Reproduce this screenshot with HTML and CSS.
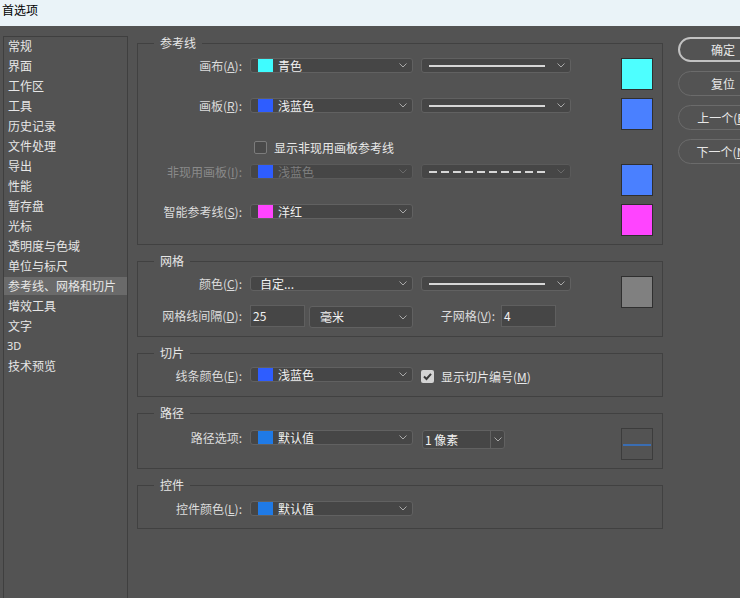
FILE: index.html
```html
<!DOCTYPE html>
<html lang="zh-CN">
<head>
<meta charset="utf-8">
<title>首选项</title>
<link rel="stylesheet" href="styles.css">
</head>
<body>
<div class="titlebar">首选项</div>
<div class="main">
  <ul class="nav">
    <li>常规</li>
    <li>界面</li>
    <li>工作区</li>
    <li>工具</li>
    <li>历史记录</li>
    <li>文件处理</li>
    <li>导出</li>
    <li>性能</li>
    <li>暂存盘</li>
    <li>光标</li>
    <li>透明度与色域</li>
    <li>单位与标尺</li>
    <li class="active">参考线、网格和切片</li>
    <li>增效工具</li>
    <li>文字</li>
    <li class="latin">3D</li>
    <li>技术预览</li>
  </ul>

  <div class="content">
    <fieldset class="group">
      <legend>参考线</legend>
      <div class="rows">
        <div class="row">
          <span class="lbl">画布(<u>A</u>):</span>
          <div class="sel"><span class="chip c-cyan"></span><span class="val">青色</span><svg class="chev" width="8" height="5" viewBox="0 0 8 5"><path d="M0.5 0.5L4 4L7.5 0.5" fill="none" stroke="currentColor"/></svg></div>
          <div class="sel line-sel"><span class="line"></span><svg class="chev" width="8" height="5" viewBox="0 0 8 5"><path d="M0.5 0.5L4 4L7.5 0.5" fill="none" stroke="currentColor"/></svg></div>
          <span class="swatch c-lightcyan"></span>
        </div>
        <div class="row">
          <span class="lbl">画板(<u>R</u>):</span>
          <div class="sel"><span class="chip c-blue"></span><span class="val">浅蓝色</span><svg class="chev" width="8" height="5" viewBox="0 0 8 5"><path d="M0.5 0.5L4 4L7.5 0.5" fill="none" stroke="currentColor"/></svg></div>
          <div class="sel line-sel"><span class="line"></span><svg class="chev" width="8" height="5" viewBox="0 0 8 5"><path d="M0.5 0.5L4 4L7.5 0.5" fill="none" stroke="currentColor"/></svg></div>
          <span class="swatch c-lightblue"></span>
        </div>
        <div class="check-row">
          <span class="cb"></span><span class="cb-text">显示非现用画板参考线</span>
        </div>
        <div class="row disabled">
          <span class="lbl">非现用画板(<u>I</u>):</span>
          <div class="sel"><span class="chip c-blue"></span><span class="val">浅蓝色</span><svg class="chev" width="8" height="5" viewBox="0 0 8 5"><path d="M0.5 0.5L4 4L7.5 0.5" fill="none" stroke="currentColor"/></svg></div>
          <div class="sel line-sel"><span class="line dashed"></span><svg class="chev" width="8" height="5" viewBox="0 0 8 5"><path d="M0.5 0.5L4 4L7.5 0.5" fill="none" stroke="currentColor"/></svg></div>
          <span class="swatch c-lightblue"></span>
        </div>
        <div class="row">
          <span class="lbl">智能参考线(<u>S</u>):</span>
          <div class="sel"><span class="chip c-magenta"></span><span class="val">洋红</span><svg class="chev" width="8" height="5" viewBox="0 0 8 5"><path d="M0.5 0.5L4 4L7.5 0.5" fill="none" stroke="currentColor"/></svg></div>
          <span class="spacer"></span>
          <span class="swatch c-magenta"></span>
        </div>
      </div>
    </fieldset>

    <fieldset class="group grid-group">
      <legend>网格</legend>
      <div class="grid">
        <span class="lbl">颜色(<u>C</u>):</span>
        <div class="sel"><span class="val plain">自定...</span><svg class="chev" width="8" height="5" viewBox="0 0 8 5"><path d="M0.5 0.5L4 4L7.5 0.5" fill="none" stroke="currentColor"/></svg></div>
        <div class="sel line-sel"><span class="line"></span><svg class="chev" width="8" height="5" viewBox="0 0 8 5"><path d="M0.5 0.5L4 4L7.5 0.5" fill="none" stroke="currentColor"/></svg></div>
        <span class="swatch c-gray span2"></span>
        <span class="lbl tall">网格线间隔(<u>D</u>):</span>
        <div class="pair">
          <span class="input">25</span>
          <div class="sel big"><span class="val plain">毫米</span><svg class="chev" width="8" height="5" viewBox="0 0 8 5"><path d="M0.5 0.5L4 4L7.5 0.5" fill="none" stroke="currentColor"/></svg></div>
        </div>
        <div class="sub">
          <span class="lbl-inline">子网格(<u>V</u>):</span>
          <span class="input">4</span>
        </div>
      </div>
    </fieldset>

    <fieldset class="group slice-group">
      <legend>切片</legend>
      <div class="grid">
        <span class="lbl">线条颜色(<u>E</u>):</span>
        <div class="sel"><span class="chip c-blue"></span><span class="val">浅蓝色</span><svg class="chev" width="8" height="5" viewBox="0 0 8 5"><path d="M0.5 0.5L4 4L7.5 0.5" fill="none" stroke="currentColor"/></svg></div>
        <div class="checked-wrap">
          <span class="cb checked"><svg width="13" height="13" viewBox="0 0 13 13"><path d="M3 6.5L5.5 9L10 3.8" fill="none" stroke="#3a3a3a" stroke-width="2"/></svg></span>
          <span class="cb-text">显示切片编号(<u>M</u>)</span>
        </div>
      </div>
    </fieldset>

    <fieldset class="group path-group">
      <legend>路径</legend>
      <div class="grid">
        <span class="lbl">路径选项:</span>
        <div class="sel"><span class="chip c-default"></span><span class="val">默认值</span><svg class="chev" width="8" height="5" viewBox="0 0 8 5"><path d="M0.5 0.5L4 4L7.5 0.5" fill="none" stroke="currentColor"/></svg></div>
        <div class="combo"><span class="combo-val">1 像素</span><span class="combo-btn"><svg class="chev" width="8" height="5" viewBox="0 0 8 5"><path d="M0.5 0.5L4 4L7.5 0.5" fill="none" stroke="currentColor"/></svg></span></div>
        <span class="swatch path-swatch"><span class="path-line"></span></span>
      </div>
    </fieldset>

    <fieldset class="group ctrl-group">
      <legend>控件</legend>
      <div class="grid">
        <span class="lbl">控件颜色(<u>L</u>):</span>
        <div class="sel"><span class="chip c-default"></span><span class="val">默认值</span><svg class="chev" width="8" height="5" viewBox="0 0 8 5"><path d="M0.5 0.5L4 4L7.5 0.5" fill="none" stroke="currentColor"/></svg></div>
      </div>
    </fieldset>
  </div>

  <div class="buttons">
    <div class="btn primary">确定</div>
    <div class="btn">复位</div>
    <div class="btn">上一个(<u>P</u>)</div>
    <div class="btn">下一个(<u>N</u>)</div>
  </div>
</div>
</body>
</html>
```
FILE: styles.css
```css
* { box-sizing: border-box; }
html, body { margin: 0; padding: 0; }
body {
  width: 740px;
  height: 598px;
  overflow: hidden;
  background: #535353;
  font-family: "Noto Sans CJK SC", "Noto Sans", sans-serif;
  font-size: 12px;
  color: #e2e2e2;
}
u { text-decoration: underline; text-underline-offset: 1px; }

.titlebar {
  height: 26px;
  background: #eaf3f8;
  color: #000;
  padding-left: 2px;
  line-height: 19px;
}

.main {
  display: flex;
  align-items: flex-start;
  padding-left: 3px;
  height: 572px;
  overflow: hidden;
}

.nav {
  flex: none;
  list-style: none;
  margin: 10px 0 0;
  padding: 0;
  width: 125px;
  height: 562px;
  border: 1px solid #3f3f3f;
  border-bottom: none;
}
.nav li {
  height: 20px;
  line-height: 18px;
  padding-left: 4px;
  border-bottom: 2px solid transparent;
  background-clip: padding-box;
  color: #e6e6e6;
  white-space: nowrap;
}
.nav li.active { background-color: #6a6a6a; }
.nav li.latin { font-size: 11px; font-family: "Noto Sans", sans-serif; padding-left: 3px; }

.content {
  flex: none;
  width: 526px;
  margin: 9px 0 0 9px;
  display: flex;
  flex-direction: column;
  gap: 8px;
}

.group {
  margin: 0;
  min-width: 0;
  border: 1px solid #414141;
  padding: 7px 9px 8px 0;
}
.group legend {
  margin-left: 16px;
  padding: 0 6px;
  line-height: 16px;
  color: #e6e6e6;
}

.rows {
  display: flex;
  flex-direction: column;
  gap: 8px;
}
.row {
  display: flex;
  align-items: flex-start;
  height: 32px;
}
.lbl {
  flex: none;
  width: 104px;
  margin-right: 8px;
  text-align: right;
  line-height: 15px;
  color: #dcdcdc;
  white-space: nowrap;
}
.sel {
  flex: none;
  width: 163px;
  height: 15px;
  display: flex;
  align-items: center;
  border: 1px solid #616161;
  border-radius: 3px;
  background: #464646;
  color: #f0f0f0;
}
.chip {
  flex: none;
  width: 15px;
  height: 13px;
  margin-left: 7px;
}
.val {
  flex: 1;
  margin-left: 5px;
  line-height: 13px;
  white-space: nowrap;
}
.val.plain { margin-left: 9px; }
.chev {
  flex: none;
  margin-right: 5px;
  color: #a9a9a9;
}
.line-sel {
  width: 150px;
  margin-left: 8px;
}
.line {
  flex: none;
  width: 116px;
  height: 2px;
  margin-left: 7px;
  margin-right: auto;
  background: #d6d6d6;
}
.line.dashed {
  background: repeating-linear-gradient(90deg, #d6d6d6 0 8px, transparent 8px 12px);
}
.spacer { flex: 1; }
.swatch {
  flex: none;
  display: block;
  width: 32px;
  height: 32px;
  margin-left: auto;
  border: 1px solid #2f2f2f;
}

.c-cyan { background: #3ffcff; }
.c-lightcyan { background: #4dffff; }
.c-blue { background: #2e5dff; }
.c-lightblue { background: #4a80ff; }
.c-magenta { background: #ff44ff; }
.c-gray { background: #808080; }
.c-default { background: #1f7ae6; }

.disabled .lbl { color: #8a8a8a; }
.disabled .sel { border-color: #5a5a5a; color: #7e7e7e; }
.disabled .chev { color: #6a6a6a; }

.check-row {
  display: flex;
  align-items: center;
  height: 13px;
  margin: 3px 0 2px;
  padding-left: 116px;
}
.cb {
  flex: none;
  width: 13px;
  height: 13px;
  border: 1px solid #7c7c7c;
  border-radius: 2px;
  background: #4a4a4a;
}
.cb.checked {
  border: none;
  background: #d4d4d4;
  display: flex;
}
.cb-text {
  margin-left: 7px;
  line-height: 13px;
  color: #e8e8e8;
  white-space: nowrap;
}

.grid {
  display: grid;
  grid-template-columns: 104px 163px 150px 1fr 32px;
  column-gap: 8px;
  align-items: start;
}
.grid .lbl { width: auto; margin-right: 0; grid-column: 1; }
.grid .sel.line-sel { margin-left: 0; }

.grid-group .grid {
  grid-template-rows: 15px 23px;
  row-gap: 14px;
}
.grid-group .span2 { grid-column: 5; grid-row: 1 / span 2; }
.lbl.tall { line-height: 22px; }
.pair {
  display: flex;
  gap: 4px;
}
.input {
  flex: none;
  width: 55px;
  height: 22px;
  padding-left: 2px;
  line-height: 19px;
  border: 1px solid #5f5f5f;
  background: #464646;
  color: #f2f2f2;
}
.sel.big {
  width: 104px;
  height: 22px;
  margin-top: 1px;
}
.sel.big .val { margin-left: 10px; line-height: 18px; }
.sub {
  display: flex;
  align-items: center;
  justify-content: flex-end;
  padding-right: 15px;
}
.lbl-inline {
  margin-right: 6px;
  line-height: 22px;
  color: #dcdcdc;
  white-space: nowrap;
}

.slice-group { padding-bottom: 13px; }
.slice-group .grid .sel { margin-top: -1px; }
.checked-wrap {
  display: flex;
  align-items: center;
  margin-top: 2px;
}
.checked-wrap .cb-text { margin-left: 7px; }

.path-group .grid { grid-template-rows: 32px; }
.path-group .grid .lbl { margin-top: 2px; }
.path-group .grid .sel { margin-top: 2px; }
.combo {
  display: flex;
  width: 83px;
  height: 19px;
  margin: 2px 0 0 1px;
  border: 1px solid #616161;
  border-radius: 3px;
  background: #464646;
  color: #f2f2f2;
}
.combo-val {
  flex: 1;
  padding-left: 2px;
  line-height: 17px;
  white-space: nowrap;
}
.combo-btn {
  flex: none;
  width: 14px;
  display: flex;
  align-items: center;
  justify-content: center;
  border-left: 1px solid #616161;
}
.combo-btn .chev { margin-right: 0; }
.path-swatch {
  grid-column: 5;
  display: flex;
  align-items: center;
  justify-content: center;
  border-color: #3c3c3c;
  background: #535353;
}
.path-line {
  width: 28px;
  height: 2px;
  margin-top: 2px;
  background: #3a6db2;
}

.ctrl-group { padding-bottom: 12px; }
.ctrl-group .grid { margin-top: 1px; }

.buttons {
  flex: none;
  width: 90px;
  margin: 11px 0 0 15px;
  display: flex;
  flex-direction: column;
  gap: 9px;
}
.btn {
  height: 25px;
  border: 1px solid #6b6b6b;
  border-radius: 13px;
  display: flex;
  align-items: center;
  justify-content: center;
  color: #e8e8e8;
  white-space: nowrap;
}
.btn.primary {
  border: 2px solid #c2c2c2;
}
```
